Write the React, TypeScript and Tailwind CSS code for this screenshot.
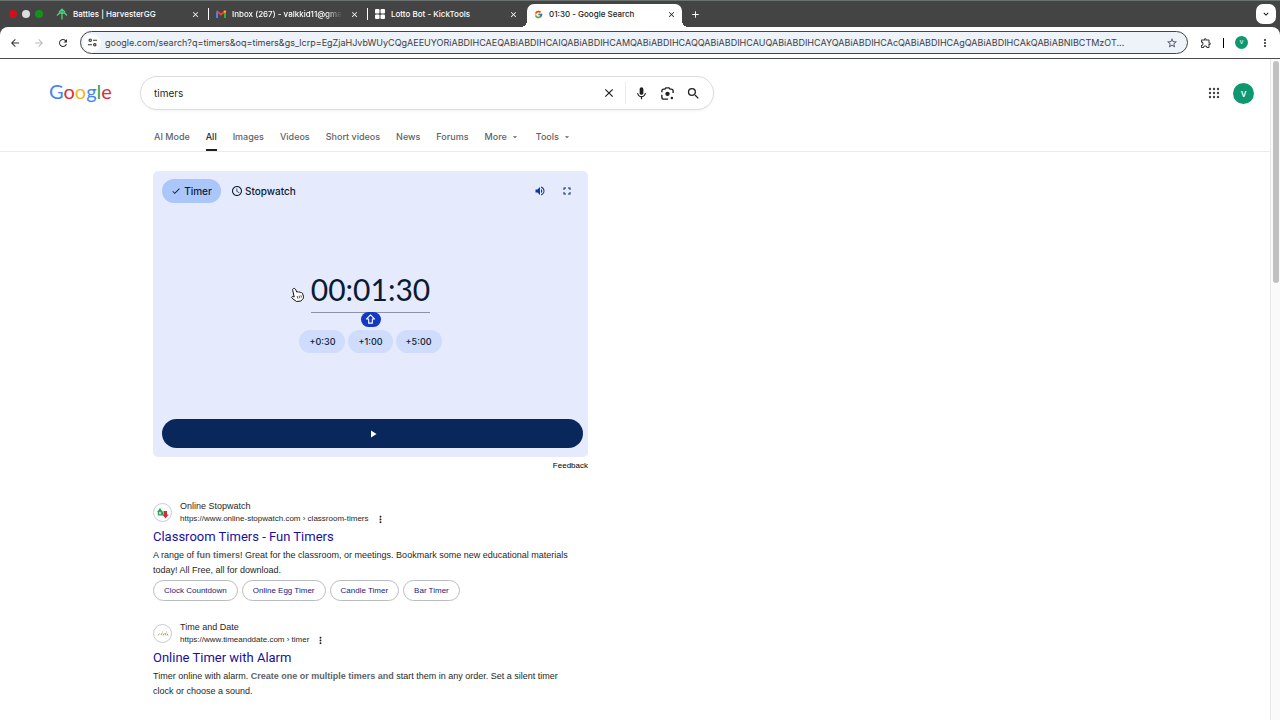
import type { ReactNode } from "react";
import { FcGoogle } from "react-icons/fc";
import {
  MdAccessTime,
  MdAdd,
  MdArrowBack,
  MdArrowDropDown,
  MdArrowForward,
  MdCheck,
  MdClose,
  MdExpandMore,
  MdFullscreen,
  MdMic,
  MdMoreVert,
  MdOutlineExtension,
  MdPlayArrow,
  MdRefresh,
  MdSearch,
  MdStarBorder,
  MdVolumeUp,
} from "react-icons/md";

const ADDRESS =
  "google.com/search?q=timers&oq=timers&gs_lcrp=EgZjaHJvbWUyCQgAEEUYORiABDIHCAEQABiABDIHCAIQABiABDIHCAMQABiABDIHCAQQABiABDIHCAUQABiABDIHCAYQABiABDIHCAcQABiABDIHCAgQABiABDIHCAkQABiABNIBCTMzOT...";

const HarvesterIcon = () => (
  <svg viewBox="0 0 12 12" className="size-3 shrink-0" fill="none" stroke="#4fd07c" strokeWidth="1.300">
    <path d="M6 11.500V1.500M3 4.200l3-3 3 3M1 7.500L3.500 5h5L11 7.500" />
  </svg>
);

const GmailIcon = () => (
  <svg viewBox="0 0 12 12" className="size-3 shrink-0" fill="none" strokeWidth="2">
    <path d="M2 10V4" stroke="#4285f4" />
    <path d="M10 10V4" stroke="#34a853" />
    <path d="M1.500 3L6 6.500l4.500-3.500" stroke="#ea4335" />
    <path d="M9 4.300L10.800 3" stroke="#fbbc04" />
  </svg>
);

const KickToolsIcon = () => (
  <svg viewBox="0 0 12 12" className="size-3 shrink-0" fill="#fff">
    <rect x="1" y="1" width="4.500" height="4.500" rx="1" />
    <rect x="6.500" y="1" width="4.500" height="4.500" rx="1" />
    <rect x="1" y="6.500" width="4.500" height="4.500" rx="1" />
    <rect x="6.500" y="6.500" width="4.500" height="4.500" rx="1" />
  </svg>
);

const SiteInfoIcon = () => (
  <svg viewBox="0 0 12 12" className="size-[11px]" fill="none" stroke="#333" strokeWidth="1.200">
    <circle cx="3.500" cy="3.500" r="1.300" />
    <path d="M6.500 3.500H11M1 8.500h4.500" />
    <circle cx="8.500" cy="8.500" r="1.300" />
  </svg>
);

const LensIcon = () => (
  <svg viewBox="0 0 24 24" className="size-[15px]" fill="none" stroke="#1f1f1f" strokeWidth="2.200">
    <path d="M3 10V8a3 3 0 0 1 3-3h2l1.500-2h5L16 5h2a3 3 0 0 1 3 3v3M3 14v4a3 3 0 0 0 3 3h7" />
    <circle cx="12" cy="12.500" r="3.500" fill="#1f1f1f" stroke="none" />
    <circle cx="19" cy="19" r="2" fill="#1f1f1f" stroke="none" />
  </svg>
);

const AppsIcon = () => (
  <svg viewBox="0 0 12 12" className="size-3" fill="#444">
    {[2, 6, 10].map((y) =>
      [2, 6, 10].map((x) => <circle key={`${x}-${y}`} cx={x} cy={y} r="1.200" />)
    )}
  </svg>
);

const HandCursor = () => (
  <svg viewBox="0 0 14 16" className="h-4 w-[14px]" fill="#fff" stroke="#111" strokeWidth="1" strokeLinejoin="round">
    <path d="M2.200 1.700c.8-.6 1.700-.3 2.200.5l1.500 3c.5-.7 1.600-.6 2 .2.500-.6 1.600-.4 1.900.4.700-.4 1.600 0 1.800.8l.8 2.600c.3 1.300 0 2.400-.8 3.200l-1.800 1.600-4.300.5-4.100-3c-.8-.7-.8-1.400-.3-1.800.6-.4 1.300-.2 2.100.3L1.700 3.200c-.3-.6 0-1.200.5-1.500z" />
    <path d="M6.200 9l.8 2.700M8.100 8.700l.8 2.500M9.900 8.300l.7 2.200" strokeWidth=".7" />
  </svg>
);

const StopwatchFavicon = () => (
  <svg viewBox="0 0 12 12" className="size-3">
    <path d="M0 5l3-4 3 4v3.500H.8V5z" fill="#2fa35a" />
    <path d="M2.200 5h1.600v2.200H2.200z" fill="#d5f0dc" />
    <path d="M6.500 4h3.500v3.500h1.700L8.500 11.500 5.300 7.500h1.200z" fill="#c5303c" />
  </svg>
);

const TimeDateFavicon = () => (
  <svg viewBox="0 0 12 12" className="size-3" fill="none" strokeWidth="1">
    <path d="M1 7.500l1.500-2M4 7l1-2" stroke="#b9a46a" />
    <path d="M6 7.500l1-2M8 5l1 2.500M10 5.500l1 2" stroke="#9a9a9a" />
    <path d="M5 4h1M9 4h1" stroke="#e3b341" />
  </svg>
);

const tabs = [
  { title: "Battles | HarvesterGG", icon: <HarvesterIcon /> },
  { title: "Inbox (267) - valkkid11@gma", icon: <GmailIcon /> },
  { title: "Lotto Bot - KickTools", icon: <KickToolsIcon /> },
];

const TabStrip = () => (
  <div className="flex h-[27px] items-end border-t border-[#6b7270] bg-[#444] pl-[9px] pr-1">
    <div className="flex h-full w-[41px] shrink-0 items-center gap-[5px]">
      <span className="size-2 rounded-full bg-[#d0111b]" />
      <span className="size-2 rounded-full bg-[#dedede]" />
      <span className="size-2 rounded-full bg-[#12941c]" />
    </div>
    {tabs.map((tab, idx) => (
      <div key={tab.title} className="flex h-full w-[159px] items-center text-white">
        <a href="#" className="flex min-w-0 flex-1 items-center gap-[5px] pl-[6px]">
          {tab.icon}
          <span
            className={`whitespace-nowrap text-[8px] font-medium ${
              idx === 1 ? "mask-r-from-85% mask-r-to-100%" : ""
            }`}
          >
            {tab.title}
          </span>
        </a>
        <button aria-label="Close tab" className="mr-2">
          <MdClose className="size-[9px]" />
        </button>
        <span className={`h-3 w-px ${idx < 2 ? "bg-white" : "bg-transparent"}`} />
      </div>
    ))}
    <div className="relative flex h-[23px] w-[155px] items-center rounded-t-[7px] bg-white pb-[3px] pl-[7px] text-[#222]">
      <span className="absolute -left-[6px] bottom-0 size-[6px] bg-[radial-gradient(circle_at_0_0,#444_6px,#fff_6px)]" />
      <span className="absolute -right-[6px] bottom-0 size-[6px] bg-[radial-gradient(circle_at_100%_0,#444_6px,#fff_6px)]" />
      <a href="#" className="flex flex-1 items-center gap-[6px]">
        <FcGoogle className="size-[9px]" />
        <span className="text-[8px] font-medium">01:30 - Google Search</span>
      </a>
      <button aria-label="Close tab" className="mr-[6px]">
        <MdClose className="size-[9px]" />
      </button>
    </div>
    <button aria-label="New tab" className="flex h-full items-center pl-2 text-white">
      <MdAdd className="size-[11px]" />
    </button>
    <button
      aria-label="Search tabs"
      className="mb-[3px] ml-auto flex size-5 items-center justify-center rounded-[7px] bg-white text-black"
    >
      <MdExpandMore className="size-[10px]" />
    </button>
  </div>
);

const Toolbar = () => (
  <div className="bg-[#444]">
    <div className="flex h-8 items-center rounded-t-lg border-b border-[#4d4d4d] bg-white px-[9px] text-[#333]">
      <div className="flex w-[71px] shrink-0 items-center gap-3">
        <button aria-label="Back">
          <MdArrowBack className="size-3" />
        </button>
        <button aria-label="Forward" className="text-[#bbb]">
          <MdArrowForward className="size-3" />
        </button>
        <button aria-label="Reload">
          <MdRefresh className="size-3" />
        </button>
      </div>
      <div className="flex h-[23px] flex-1 items-center rounded-full border border-[#444] bg-[#eef2f9] pl-[2px] pr-[9px]">
        <button
          aria-label="Site information"
          className="flex size-[18px] shrink-0 items-center justify-center rounded-full bg-white"
        >
          <SiteInfoIcon />
        </button>
        <input
          aria-label="Address"
          defaultValue={ADDRESS}
          className="min-w-0 flex-1 bg-transparent px-1 text-[9px] text-[#3c3f44] outline-none"
        />
        <button aria-label="Bookmark this tab">
          <MdStarBorder className="size-3 text-[#4a4f66]" />
        </button>
      </div>
      <div className="flex shrink-0 items-center gap-[11px] pl-3">
        <button aria-label="Extensions">
          <MdOutlineExtension className="size-3" />
        </button>
        <span className="h-[10px] w-px bg-black" />
        <button
          aria-label="Profile"
          className="flex size-[13px] items-center justify-center rounded-full bg-[#0f9770] text-[7px] text-white"
        >
          v
        </button>
        <button aria-label="Browser menu">
          <MdMoreVert className="size-3" />
        </button>
      </div>
    </div>
  </div>
);

const SearchHeader = () => (
  <div className="flex items-center pl-[49px] pr-4 pt-[17px]">
    <a href="#" aria-label="Google" className="w-[91px] shrink-0 pb-1 font-[Lato,sans-serif] text-[20px] leading-6">
      <span className="text-[#4285f4]">G</span>
      <span className="text-[#db2c3a]">o</span>
      <span className="text-[#f4b81c]">o</span>
      <span className="text-[#4285f4]">g</span>
      <span className="text-[#34a853]">l</span>
      <span className="text-[#db2c3a]">e</span>
    </a>
    <form className="flex h-[34px] max-w-[574px] flex-1 items-center rounded-full border border-[#dcdcdc] pl-[13px] pr-3 text-[#1f1f1f] shadow-[0_1px_3px_rgba(0,0,0,0.06)]">
      <input
        aria-label="Search"
        defaultValue="timers"
        className="min-w-0 flex-1 bg-transparent text-[10px] outline-none"
      />
      <button type="button" aria-label="Clear">
        <MdClose className="size-[14px]" />
      </button>
      <span className="ml-[9px] mr-2 h-[22px] w-px bg-[#ececec]" />
      <div className="flex items-center gap-[11px]">
        <button type="button" aria-label="Search by voice">
          <MdMic className="size-[15px]" />
        </button>
        <button type="button" aria-label="Search by image">
          <LensIcon />
        </button>
        <button type="submit" aria-label="Search">
          <MdSearch className="size-[15px]" />
        </button>
      </div>
    </form>
    <div className="ml-auto flex items-center gap-[13px]">
      <button aria-label="Google apps">
        <AppsIcon />
      </button>
      <button
        aria-label="Account"
        className="flex size-[21px] items-center justify-center rounded-full bg-[#0f9770] text-[10px] font-medium text-white"
      >
        v
      </button>
    </div>
  </div>
);

const navItems = ["AI Mode", "All", "Images", "Videos", "Short videos", "News", "Forums"];

const SearchNav = () => (
  <nav className="mt-3 flex gap-4 border-b border-[#ebebeb] pl-[154px] text-[9px] font-medium text-[#5f6368]">
    {navItems.map((item) => (
      <a
        key={item}
        href="#"
        className={`flex h-[29px] items-center whitespace-nowrap border-b-2 pt-[2px] ${
          item === "All" ? "border-[#1f1f1f] text-[#1f1f1f]" : "border-transparent"
        }`}
      >
        {item}
      </a>
    ))}
    {["More", "Tools"].map((item) => (
      <button key={item} className="flex h-[29px] items-center gap-[3px] border-b-2 border-transparent pt-[2px]">
        {item}
        <MdArrowDropDown className="size-[10px]" />
      </button>
    ))}
  </nav>
);

const TimerCard = () => (
  <section className="relative flex h-[286px] flex-col rounded-[5px] bg-[#e5eafd] pb-[9px] pl-[9px] pr-[5px] pt-2 text-[#0b1b33]">
    <div className="flex items-center text-[10px] font-medium">
      <button className="flex h-6 w-[59px] items-center justify-center gap-[3px] rounded-full bg-[#abc6fb]">
        <MdCheck className="size-[10px]" />
        Timer
      </button>
      <button className="ml-[10px] flex items-center gap-[2px]">
        <MdAccessTime className="size-3" />
        Stopwatch
      </button>
      <div className="ml-auto flex items-center gap-[15px] pr-[10px] text-[#0b3aa0]">
        <button aria-label="Mute">
          <MdVolumeUp className="size-3" />
        </button>
        <button aria-label="Full screen" className="text-[#0b2b78]">
          <MdFullscreen className="size-3" />
        </button>
      </div>
    </div>

    <div className="flex flex-1 flex-col items-center pr-[4px] pt-[66px]">
      <div className="relative border-b border-[#8d93a3] pb-[3px]">
        <div className="font-[Lato,sans-serif] text-[30px] leading-10">00:01:30</div>
        <span className="absolute left-1/2 top-full flex h-[15px] w-5 -translate-x-1/2 items-center justify-center rounded-full bg-[#1238c4]">
          <svg viewBox="0 0 12 12" className="size-[11px]" fill="none" stroke="#fff" strokeWidth="1.200" strokeLinejoin="round">
            <path d="M6 1l4.500 4.500H8V10H4V5.500H1.500z" />
          </svg>
        </span>
      </div>
      <div className="mt-[17px] flex gap-[3px] text-[9px] font-medium">
        {["+0:30", "+1:00", "+5:00"].map((step) => (
          <button key={step} className="h-[23px] rounded-full bg-[#cfdcfb] px-[10px]">
            {step}
          </button>
        ))}
      </div>
    </div>

    <button aria-label="Start" className="flex h-[29px] items-center justify-center rounded-full bg-[#0a275c] text-white">
      <MdPlayArrow className="size-3" />
    </button>

    <div className="pointer-events-none absolute left-[138px] top-[116px]">
      <HandCursor />
    </div>
  </section>
);

type ResultProps = {
  icon: ReactNode;
  site: string;
  url: string;
  title: string;
  children: ReactNode;
  links?: string[];
};

const Result = ({ icon, site, url, title, children, links }: ResultProps) => (
  <article className="font-['Liberation_Sans',Arial,sans-serif] text-[#1f1f1f]">
    <div className="flex items-center gap-2">
      <span className="flex size-[19px] items-center justify-center rounded-full border border-[#c8ccd0]">
        {icon}
      </span>
      <div>
        <div className="text-[9px] leading-[13px]">{site}</div>
        <div className="flex items-center gap-[6px] text-[8px] leading-3">
          {url}
          <button aria-label="About this result">
            <MdMoreVert className="size-[11px]" />
          </button>
        </div>
      </div>
    </div>
    <h3 className="mt-[2px] font-[Roboto,sans-serif] text-[13px] leading-5 text-[#1a0f9c]">
      <a href="#">{title}</a>
    </h3>
    <p className="mt-px text-[9px] leading-[15px]">{children}</p>
    {links && (
      <div className="mt-[2px] flex gap-1 text-[8px] text-[#1a1a7c]">
        {links.map((link) => (
          <a key={link} href="#" className="flex h-[21px] items-center rounded-full border border-[#b9bcc0] px-[10px]">
            {link}
          </a>
        ))}
      </div>
    )}
  </article>
);

export default function App() {
  return (
    <div className="flex min-h-screen flex-col bg-white font-[Inter,sans-serif]">
      <TabStrip />
      <Toolbar />
      <div className="flex flex-1">
        <div className="min-w-0 flex-1">
          <SearchHeader />
          <SearchNav />
          <main className="ml-[153px] max-w-[435px] pt-[19px]">
            <TimerCard />
            <div className="mt-[3px] text-right font-['Liberation_Sans',Arial,sans-serif] text-[8px] leading-3">
              <a href="#">Feedback</a>
            </div>
            <div className="flex flex-col gap-5 pt-7">
              <Result
                icon={<StopwatchFavicon />}
                site="Online Stopwatch"
                url="https://www.online-stopwatch.com › classroom-timers"
                title="Classroom Timers - Fun Timers"
                links={["Clock Countdown", "Online Egg Timer", "Candle Timer", "Bar Timer"]}
              >
                A range of <b className="text-[#5f6368]">fun timers</b>! Great for the classroom, or meetings. Bookmark
                some new educational materials
                <br />
                today! All Free, all for download.
              </Result>
              <Result
                icon={<TimeDateFavicon />}
                site="Time and Date"
                url="https://www.timeanddate.com › timer"
                title="Online Timer with Alarm"
              >
                Timer online with alarm. <b className="text-[#5f6368]">Create one or multiple timers and</b> start them
                in any order. Set a silent timer
                <br />
                clock or choose a sound.
              </Result>
            </div>
          </main>
        </div>
        <div className="w-[10px] border-l border-[#e8e8e8] bg-[#fafafa] pl-[2px] pt-[2px]">
          <div className="h-[222px] w-[6px] rounded-full bg-[#c1c1c1]" />
        </div>
      </div>
    </div>
  );
}
